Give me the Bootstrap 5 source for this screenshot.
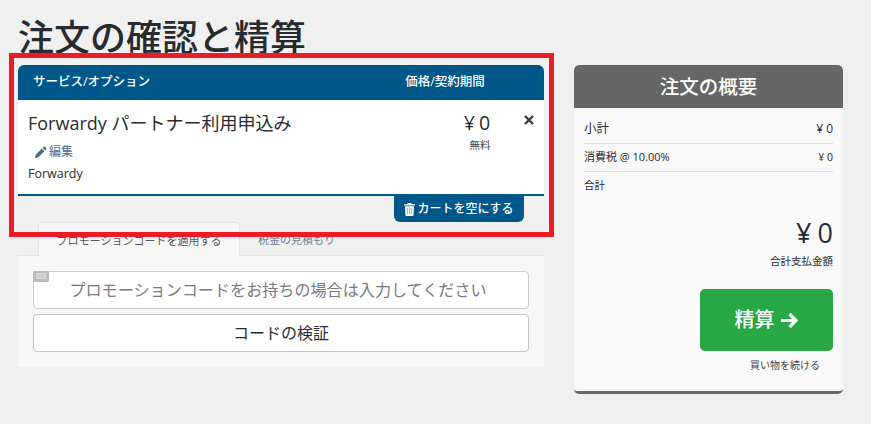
<!DOCTYPE html>
<html lang="ja">
<head>
<meta charset="utf-8">
<title>注文の確認と精算</title>
<link href="https://cdn.jsdelivr.net/npm/bootstrap@5.3.0/dist/css/bootstrap.min.css" rel="stylesheet">
<style>
html,body{height:424px;overflow:hidden}
body{background:#f0f0f0;color:#272b30;font-family:"Open Sans","Noto Sans CJK JP",sans-serif;font-size:14px;position:relative}
.page-wrap{padding:0 28px 0 18px;gap:30px;align-items:flex-start}
.main-col{width:526px;flex:none}
.side-col{width:269px;flex:none;margin-top:65px}
.page-title{font-size:36px;line-height:42px;height:65px;margin:0;padding-top:14px;font-weight:500;white-space:nowrap;font-family:"Noto Sans CJK JP",sans-serif}
.cart-head{background:#00588a;color:#fff;height:35px;border-radius:6px 6px 0 0;font-size:12.500px;font-weight:500;padding:0 15px}
.cart-head .h-price{width:80px;margin-right:44px;font-size:12.500px;font-weight:500;text-align:center;white-space:nowrap;margin-top:-1px;margin-left:-3px}
.cart-item{background:#fff;height:96px;border-bottom:2.500px solid #00588a;padding:9px 10px 0 10px}
.item-name{font-size:18px;line-height:28px}
.item-edit{font-size:12px;color:#4a6c94;margin:6px 0 0 6px;line-height:18px;gap:2px}
.item-sub{font-size:12.500px;line-height:18px;margin-top:4px}
.price-box{width:60px;margin-right:17px;text-align:center}
.price-big{font-size:19.500px;line-height:28px;word-spacing:-1px}
.price-note{font-size:10.500px;line-height:14px;color:#444;margin-top:1px;padding-left:6px}
.remove-x{margin-top:6px;line-height:0}
.empty-row{height:26px;padding-right:20px}
.empty-btn{background:#00588a;color:#fff;border:0;height:26px;width:130px;border-radius:0 0 6px 6px;font-size:12px;font-weight:500;padding:0;gap:2px}
.empty-btn:hover{background:#00588a;color:#fff}
.promo-tabs{height:34px;padding-left:20px;border-bottom:1px solid #e4e5e7}
.promo-tab{font-size:11px;height:34px;padding:10px 17px 0 18px;color:#6a7c92;white-space:nowrap;line-height:16px}
.promo-tab.on{width:202px;background:#f7f7f7;border:1px solid #e1e3e6;border-bottom:0;border-radius:5px 5px 0 0;color:#555;text-align:center;padding:10px 0 0;height:35px}
.promo-body{background:#f7f7f7;height:111px;padding:15px 15px 0}
.promo-input-wrap{position:relative;width:496px}
.promo-input{height:38px;border:1px solid #ccc;border-radius:4px;font-size:16.100px;text-align:center;padding:0 12px 0 6px;background:#fff;color:#6c757d}
.promo-input::placeholder{color:#7a7a7a;opacity:1}
.ticket{position:absolute;left:0;top:0;width:16px;height:11px;background:#bcbcbc;border-radius:1px 1px 2px 2px}
.ticket::after{content:"";position:absolute;left:3px;top:2px;width:10px;height:6px;background:#cfcfcf;border:1px solid #dcdcdc}
.verify-btn{width:496px;height:38px;margin-top:5px;background:#fff;border:1px solid #c4c4c4;border-radius:4px;font-size:16px;color:#272b30;padding:0}
.verify-btn:hover{background:#fff;color:#272b30;border-color:#c4c4c4}
.summary{border-radius:5px;overflow:hidden;background:#f9f9f9;border-bottom:3px solid #666;height:329px}
.summary-head{background:#666;color:#fff;font-size:19.500px;font-weight:500;text-align:center;height:43px;line-height:42px;border-radius:5px 5px 0 0;font-family:"Noto Sans CJK JP",sans-serif}
.summary-body{padding:7px 10px 0}
.sum-row{display:flex;justify-content:space-between;align-items:center;border-bottom:1px solid #dcdcdc}
.sum-a{height:29px;font-size:12.500px}
.sum-a span+span{font-size:12px}
.sum-b{height:28px;font-size:11px}
.sum-b span+span{font-size:10.500px}
.sum-c{height:27px;font-size:10.500px;border-bottom:0}
.total-num{font-size:27px;line-height:36px;text-align:right;margin-top:16px;word-spacing:-1px}
.total-lbl{font-size:10.500px;text-align:right;line-height:16px;margin-top:2px}
.go-btn{background:#28a745;color:#fff;border:0;width:133px;height:62px;border-radius:5px;font-size:20px;font-weight:500;padding:0;gap:5px;margin-top:20px}
.go-btn:hover{background:#28a745;color:#fff}
.cont-link{font-size:10px;line-height:16px;color:#444;text-align:right;padding-right:13px;margin-top:6px}
.red-frame{position:absolute;left:9px;top:53px;width:545px;height:184px;border:5px solid #ed1c24;pointer-events:none}
</style>
</head>
<body>
<div class="d-flex page-wrap">
  <div class="main-col">
    <h1 class="page-title">注文の確認と精算</h1>
    <div class="cart-head d-flex align-items-center justify-content-between">
      <span>サービス/オプション</span>
      <span class="h-price">価格/契約期間</span>
    </div>
    <div class="cart-item d-flex justify-content-between">
      <div class="flex-grow-1">
        <div class="item-name">Forwardy パートナー利用申込み</div>
        <div class="item-edit d-flex align-items-center">
          <svg width="13" height="13" viewBox="0 0 13 13"><path fill="#4a6c94" d="M9.600.8a1 1 0 0 1 1.400 0l1.200 1.200a1 1 0 0 1 0 1.400l-1 1L8.600 1.800zM7.900 2.500l2.600 2.600-6.200 6.200-3.400.9.800-3.500z"/></svg>
          <span>編集</span>
        </div>
        <div class="item-sub">Forwardy</div>
      </div>
      <div class="price-box">
        <div class="price-big">¥ 0</div>
        <div class="price-note">無料</div>
      </div>
      <div class="remove-x">
        <svg width="10" height="10" viewBox="0 0 10 10"><path stroke="#2f3a4a" stroke-width="2.300" d="M1 1l8 8M9 1l-8 8"/></svg>
      </div>
    </div>
    <div class="empty-row d-flex justify-content-end">
      <button type="button" class="btn empty-btn d-flex align-items-center justify-content-center">
        <svg width="11" height="13" viewBox="0 0 11 13"><path fill="#fff" d="M3.800 0h3.400l.6 1.200H11v1.300H0V1.200h3.200zM1 3.200h9l-.5 9a.9.9 0 0 1-.9.8H2.400a.9.9 0 0 1-.9-.8z"/><path stroke="#7fb0cf" stroke-width=".9" d="M3.600 5v6M5.500 5v6M7.400 5v6"/></svg>
        <span>カートを空にする</span>
      </button>
    </div>
    <div class="promo-tabs d-flex">
      <div class="promo-tab on">プロモーションコードを適用する</div>
      <div class="promo-tab">税金の見積もり</div>
    </div>
    <div class="promo-body">
      <div class="promo-input-wrap">
        <input class="form-control promo-input" type="text" placeholder="プロモーションコードをお持ちの場合は入力してください">
        <span class="ticket"></span>
      </div>
      <button type="button" class="btn verify-btn">コードの検証</button>
    </div>
  </div>
  <div class="side-col">
    <div class="summary">
      <div class="summary-head">注文の概要</div>
      <div class="summary-body">
        <div class="sum-row sum-a"><span>小計</span><span>¥ 0</span></div>
        <div class="sum-row sum-b"><span>消費税 @ 10.00%</span><span>¥ 0</span></div>
        <div class="sum-row sum-c"><span>合計</span></div>
        <div class="total-num">¥ 0</div>
        <div class="total-lbl">合計支払金額</div>
        <div class="d-flex justify-content-end">
          <button type="button" class="btn go-btn d-flex align-items-center justify-content-center">
            <span>精算</span>
            <svg width="19" height="17" viewBox="0 0 19 17"><path fill="none" stroke="#fff" stroke-width="3.200" d="M1 8.500h15M9.500 2l6.500 6.500-6.500 6.500"/></svg>
          </button>
        </div>
        <div class="cont-link">買い物を続ける</div>
      </div>
    </div>
  </div>
</div>
<div class="red-frame"></div>
</body>
</html>
